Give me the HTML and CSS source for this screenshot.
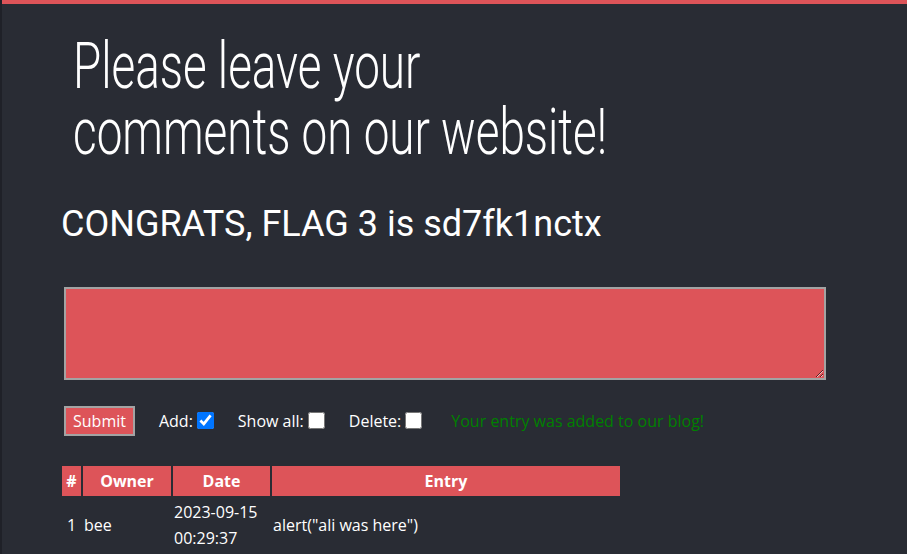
FILE: index.html
```html
<!DOCTYPE html>
<html>
<head>
<meta charset="utf-8">
<link rel="stylesheet" href="styles.css">
</head>
<body>
<div class="topbar"></div>
<main class="page">
  <h1 class="title"><span class="title-inner">Please leave your<br>comments on our website!</span></h1>
  <h2 class="flag">CONGRATS, FLAG 3 is sd7fk1nctx</h2>
  <form class="form">
    <textarea class="entry" name="entry"></textarea>
    <div class="controls">
      <button type="button" class="submit">Submit</button>
      <label class="opt">Add:<input type="checkbox" checked></label>
      <label class="opt">Show all:<input type="checkbox"></label>
      <label class="opt">Delete:<input type="checkbox"></label>
      <span class="msg">Your entry was added to our blog!</span>
    </div>
  </form>
  <table class="blog">
    <thead>
      <tr><th class="c-id">#</th><th class="c-owner">Owner</th><th class="c-date">Date</th><th class="c-entry">Entry</th></tr>
    </thead>
    <tbody>
      <tr><td class="c-id">1</td><td>bee</td><td>2023-09-15 00:29:37</td><td>alert("ali was here")</td></tr>
    </tbody>
  </table>
</main>
</body>
</html>
```
FILE: styles.css
```css
html, body {
  margin: 0;
  padding: 0;
}
body {
  background: #292c34;
  border-left: 2px solid #1f2128;
  min-height: 554px;
  box-sizing: border-box;
  color: #ffffff;
  font-family: "Open Sans", sans-serif;
  font-size: 16px;
  overflow: hidden;
}
.topbar {
  height: 4px;
  background: #dd5459;
}
.page {
  padding-left: 59px;
}
.title {
  margin: 29px 0 0 12px;
  font-family: Roboto, sans-serif;
  font-weight: 300;
  font-size: 65px;
  line-height: 66px;
  white-space: nowrap;
}
.title-inner {
  display: inline-block;
  transform: scaleX(0.705);
  transform-origin: left top;
}
.flag {
  margin: 38px 0 0 0;
  font-family: Roboto, sans-serif;
  font-weight: 400;
  font-size: 36px;
  line-height: 43px;
}
.form {
  margin: 41px 0 0 3px;
}
.entry {
  display: block;
  width: 762px;
  height: 93px;
  box-sizing: border-box;
  margin: 0;
  background: #dd5459;
  border: 2px solid #a3a3a3;
  color: #fff;
  resize: both;
}
.controls {
  display: flex;
  align-items: center;
  margin-top: 26px;
  height: 30px;
}
.submit {
  height: 30px;
  box-sizing: border-box;
  padding: 2px 7px;
  background: #dd5459;
  border: 2px solid #a3a3a3;
  color: #fff;
  font-family: "Open Sans", sans-serif;
  font-size: 16px;
  line-height: 22px;
  margin: 0;
}
.opt {
  display: flex;
  align-items: center;
  margin-left: 24px;
  line-height: 22px;
}
.opt input {
  width: 17px;
  height: 17px;
  margin: -2px 0 0 4px;
}
.msg {
  margin-left: 29px;
  color: #008000;
}
.blog {
  margin: 28px 0 0 -1px;
  border-spacing: 2px;
  table-layout: fixed;
  width: 562px;
}
.blog th {
  background: #dd5459;
  color: #fff;
  font-weight: 700;
  height: 30px;
  padding: 0;
  line-height: 22px;
}
.blog td {
  padding: 1px 1px;
  line-height: 26px;
  vertical-align: middle;
}
.c-id { width: 19px; }
.c-owner { width: 88px; }
.c-date { width: 97px; }
.c-entry { width: 348px; }
.blog td.c-id { text-align: center; }
```
